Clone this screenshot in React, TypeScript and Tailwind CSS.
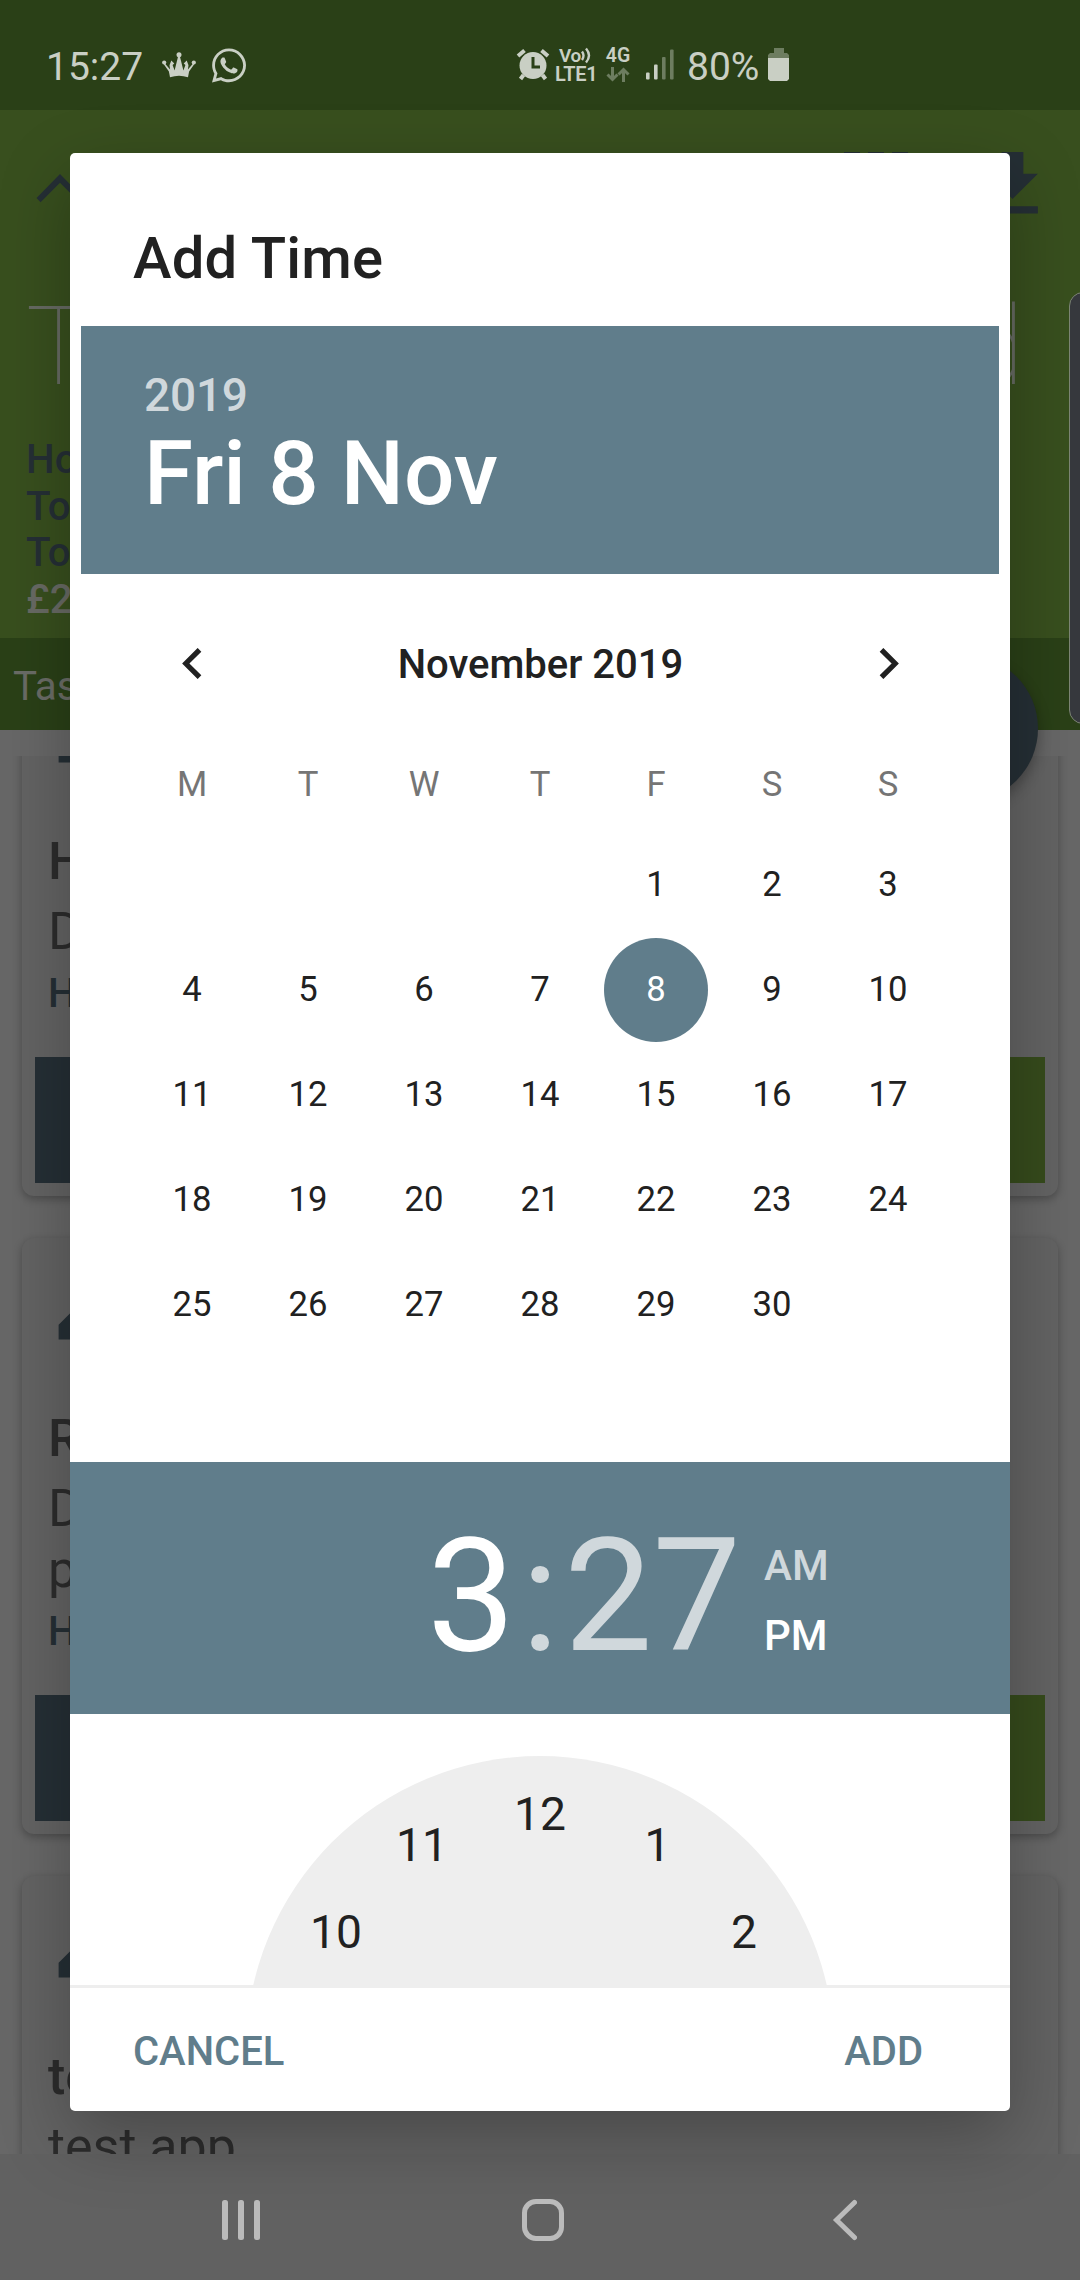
import React from "react";
import { FaWhatsapp } from "react-icons/fa";

const days = ["M", "T", "W", "T", "F", "S", "S"];
const cells: (number | null)[] = [
  null, null, null, null,
  ...Array.from({ length: 30 }, (_, i) => i + 1),
  null,
];
const hours = [
  { n: 10, x: 336, y: 1932 },
  { n: 11, x: 422, y: 1845 },
  { n: 12, x: 540, y: 1813.5 },
  { n: 1, x: 657.5, y: 1845 },
  { n: 2, x: 744, y: 1932 },
];

function StatusBar() {
  return (
    <div className="flex h-[110px] shrink-0 items-start bg-[#2a4017] pl-[46px] text-[#c9cfc4]">
      <span className="mt-[45px] w-[116px] text-[39px] leading-[44px]">15:27</span>
      <svg className="mt-[52px] h-[26px] w-[34px]" viewBox="0 0 34 26" fill="currentColor">
        <circle cx="17" cy="2.8" r="2.5" />
        <circle cx="2.2" cy="10.5" r="2.1" />
        <circle cx="31.8" cy="10.5" r="2.1" />
        <path d="M16.2 4h1.6l3.6 14.5 2-5.5-1.7-1.6 3-2.8 1.8 4.6-.6 4.3 6-7 1 .7-5.8 8.3L26 25.2Q17 22.200 8 25.200L6.900 19.500 1.100 11.200l1-.7 6 7-.6-4.300 1.800-4.600 3 2.800-1.700 1.600 2 5.500z" />
      </svg>
      <FaWhatsapp className="mt-[46px] ml-[16px] h-[39px] w-[34px]" />
      <svg className="mt-[48px] ml-[270px] h-[33px] w-[34px]" viewBox="0 0 34 33">
        <circle cx="17" cy="17.500" r="13.500" fill="currentColor" />
        <path d="M2 8l6.500-5.500M32 8l-6.500-5.500" stroke="currentColor" strokeWidth="4" />
        <path d="M7.500 27l-3 4M26.500 27l3 4" stroke="currentColor" strokeWidth="4" />
        <path d="M17 9v10h7" fill="none" stroke="#2a4017" strokeWidth="3" />
      </svg>
      <div className="mt-[47px] ml-[5px] flex w-[42px] flex-col font-semibold">
        <div className="flex items-center pl-[4px]">
          <span className="text-[19px] leading-[17px] tracking-[-0.5px]">Vo</span>
          <svg className="h-[17px] w-[11px]" viewBox="0 0 11 17" fill="none" stroke="currentColor" strokeWidth="2.400">
            <path d="M1 4.500q3 4 0 8.500M5 1.500q6 7 0 14" />
          </svg>
        </div>
        <span className="mt-[1px] text-[20px] leading-[19px] tracking-[-0.3px]">LTE1</span>
      </div>
      <div className="mt-[47px] ml-[8px] flex w-[26px] flex-col items-center">
        <span className="text-[19.5px] font-semibold leading-[18px]">4G</span>
        <svg className="mt-[2px] h-[15px] w-[24px]" viewBox="0 0 24 15" fill="none" stroke="#6d7d60" strokeWidth="3">
          <path d="M6.500 0v12M1.500 7.500l5 5 5-5M17.500 15V3M12.500 7.500l5-5 5 5" />
        </svg>
      </div>
      <svg className="mt-[49px] ml-[15px] h-[31px] w-[28px]" viewBox="0 0 28 31">
        <rect x="0" y="23.500" width="3.600" height="7" rx="1" fill="currentColor" />
        <rect x="8" y="15.500" width="3.600" height="15" rx="1" fill="currentColor" />
        <rect x="16" y="8" width="3.600" height="22.500" rx="1" fill="#6d7d60" />
        <rect x="24" y="0.500" width="3.600" height="30" rx="1" fill="#6d7d60" />
      </svg>
      <span className="mt-[45px] ml-[13px] w-[81px] text-[39px] leading-[44px]">80%</span>
      <svg className="mt-[48px] h-[33px] w-[21px]" viewBox="0 0 21 33">
        <path d="M6 0h10v5h3l2 2v6H0V7l2-2h4z" fill="#6d7d60" />
        <path d="M0 10h21v21l-2 2H2l-2-2z" fill="currentColor" />
      </svg>
    </div>
  );
}

function Header() {
  return (
    <div className="flex h-[528px] shrink-0 flex-col bg-[#384f1e]">
      <div className="flex pt-[31px] text-[#252f35]">
        <svg className="ml-[17px] h-[87px] w-[87px]" viewBox="0 0 87 87" fill="currentColor">
          <path d="M43 33 19.500 57l4.100 4.200L43 41.800l19.400 19.400 4.100-4.200z" />
        </svg>
        <svg className="ml-[740px] h-[87px] w-[64px]" viewBox="0 0 64 87" fill="currentColor">
          <path d="M0 11h16v16H0zM24 11h16v16H24zM48 11h16v16H48zM0 35h16v16H0zM24 35h16v16H24zM48 35h16v16H48z" />
        </svg>
        <svg className="ml-[61px] h-[87px] w-[87px]" viewBox="0 0 24 24" fill="currentColor">
          <path d="M19 9h-4V3H9v6H5l7 7 7-7zM5 18v2h14v-2H5z" />
        </svg>
      </div>
      <div className="mt-[55px] flex justify-between pr-[56px] pl-[26px] text-[109px] font-thin leading-[128px] text-[#666a62]">
        <span>T</span>
        <span>d</span>
      </div>
      <div className="mt-[26px] flex flex-col pl-[26px] text-[40.4px] font-medium leading-[46.7px] text-[#252f35]">
        <span>Ho</span>
        <span>Tot</span>
        <span>Tot</span>
        <span className="text-[#686a64]">£2</span>
      </div>
    </div>
  );
}

function Card({ title, lines, className = "" }: { title: string; lines: string[]; className?: string }) {
  return (
    <div className={"mx-[22px] flex shrink-0 flex-col rounded-[12px] bg-[#636363] px-[13px] pb-[13px] shadow-[0_3px_8px_rgba(0,0,0,0.28)] " + className}>
      <svg className="mt-[20px] ml-[12px] h-[93px] w-[93px] text-[#252f35]" viewBox="0 0 24 24" fill="currentColor">
        <path d="M3 17.250V21h3.750L17.810 9.940l-3.750-3.750L3 17.250zM20.710 7.040a1 1 0 0 0 0-1.410l-2.340-2.340a1 1 0 0 0-1.410 0l-1.830 1.830 3.750 3.750 1.830-1.830z" />
      </svg>
      <div className="mt-[57px] ml-[13px] text-[52px] leading-[61px] font-medium text-[#2c2c2c]">{title}</div>
      <div className="mt-[9px] ml-[13px] text-[52px] leading-[61px] text-[#2c2c2c]">
        {lines.map((l) => (
          <div key={l}>{l}</div>
        ))}
      </div>
      <div className="mt-[8px] ml-[13px] text-[40.4px] leading-[47px] font-medium text-[#252f35]">H</div>
      <div className="mt-[40px] flex h-[126px] justify-between">
        <div className="w-[300px] bg-[#252f35]" />
        <div className="w-[300px] bg-[#364b1c]" />
      </div>
    </div>
  );
}

function DialogClock() {
  return (
    <div className="relative h-[271px] overflow-hidden">
      <div className="absolute top-[42px] left-[176px] h-[588px] w-[588px] rounded-full bg-[#eee]" />
      {hours.map((h) => (
        <span
          key={h.n}
          className="absolute -translate-x-1/2 -translate-y-1/2 text-[46.2px] leading-[54px] text-[#212121]"
          style={{ left: h.x - 70, top: h.y - 1714 }}
        >
          {h.n}
        </span>
      ))}
    </div>
  );
}

function Dialog() {
  return (
    <div className="absolute top-[153px] left-[70px] flex h-[1958px] w-[940px] flex-col overflow-hidden rounded-[5px] bg-white text-[#212121]">
      <h1 className="h-[173px] pt-[71px] pl-[63px] text-[58px] leading-[68px] font-medium tracking-[0.2px]">Add Time</h1>
      <div className="mx-[11px] flex h-[248px] flex-col bg-[#607d8b] pt-[42px] pl-[63px] font-medium">
        <span className="text-[46px] leading-[54px] tracking-[-0.2px] text-[#d0d8dc]">2019</span>
        <span className="text-[89px] leading-[104px] text-white">Fri 8 Nov</span>
      </div>
      <div className="mx-[64px] mt-[37px] flex h-[105px] items-center justify-between pr-[47px] pl-[48px] text-[40px] font-medium">
        <svg className="h-[31px] w-[20px]" viewBox="0 0 20 31" fill="none" stroke="currentColor" strokeWidth="5.200">
          <path d="M17.500 1.800 3.800 15.500l13.700 13.700" />
        </svg>
        <span className="pt-[2px]">November 2019</span>
        <svg className="h-[31px] w-[20px]" viewBox="0 0 20 31" fill="none" stroke="currentColor" strokeWidth="5.200">
          <path d="M2.500 1.800l13.700 13.700L2.500 29.200" />
        </svg>
      </div>
      <div className="mx-[64px] mt-[39px] grid h-[60px] grid-cols-7 items-center text-center text-[34.65px] text-[#757575]">
        {days.map((d, i) => (
          <span key={i}>{d}</span>
        ))}
      </div>
      <div className="mx-[64px] mt-[17px] grid h-[630px] auto-rows-[105px] grid-cols-7 text-[34.65px]">
        {cells.map((c, i) => (
          <div key={i} className="flex items-center justify-center">
            {c === 8 ? (
              <span className="flex size-[104px] items-center justify-center rounded-full bg-[#607d8b] text-white">8</span>
            ) : (
              c
            )}
          </div>
        ))}
      </div>
      <div className="flex h-[252px] bg-[#607d8b] text-white">
        <div className="flex pt-[8px] pl-[357px] text-[157.5px] leading-[252px]">
          <span className="w-[89px]">3</span>
          <span className="w-[48px] text-center text-[#d0d8dc]">:</span>
          <span className="text-[#d0d8dc]">27</span>
        </div>
        <div className="flex flex-col pt-[69px] pl-[23px] text-[42px] leading-[70px] font-medium">
          <span className="text-[#d0d8dc]">AM</span>
          <span>PM</span>
        </div>
      </div>
      <DialogClock />
      <div className="flex flex-1 items-center justify-between border-t-[3px] border-[#eee] pt-[4px] pr-[87px] pl-[63px] text-[40px] font-medium text-[#607d8b]">
        <span>CANCEL</span>
        <span>ADD</span>
      </div>
    </div>
  );
}

export default function App() {
  return (
    <div className="relative h-[2280px] w-[1080px] overflow-hidden bg-[#676767] [font-family:Roboto,sans-serif]">
      <div className="flex h-full flex-col">
        <StatusBar />
        <Header />
        <div className="flex h-[92px] shrink-0 items-center bg-[#2a4017] pl-[13px] text-[40.4px] text-[#6a6c66]">
          <span className="mt-[6px]">Tas</span>
        </div>
        <div className="mt-[26px] flex flex-1 flex-col overflow-hidden">
          <Card title="H" lines={["D"]} className="-mt-[95px]" />
          <Card title="R" lines={["D", "p"]} className="mt-[42px]" />
          <Card title="te" lines={["test app"]} className="mt-[42px]" />
        </div>
        <div className="h-[126px] shrink-0 bg-[#616161]" />
      </div>

      <div className="absolute top-[655px] left-[891px] size-[147px] rounded-full bg-[#252f35] shadow-[0_6px_14px_rgba(0,0,0,0.3)]" />
      <div className="absolute top-[153px] left-[70px] h-[1958px] w-[940px] rounded-[5px] shadow-[0_25px_70px_rgba(0,0,0,0.27)]" />
      <div className="absolute top-[292px] left-[1069px] h-[432px] w-[30px] rounded-[14px] border-[1.5px] border-[#7c8474] bg-[#36383d]" />
      <Dialog />

      <div className="absolute bottom-0 flex h-[126px] w-full items-center pt-[6px]">
        <svg className="ml-[221px] h-[42px] w-[40px]" viewBox="0 0 40 42" fill="#bbb">
          <rect x="1" y="1" width="6" height="40" rx="2.500" />
          <rect x="17" y="1" width="6" height="40" rx="2.500" />
          <rect x="33" y="1" width="6" height="40" rx="2.500" />
        </svg>
        <div className="ml-[261px] size-[42px] rounded-[14px] border-[5px] border-[#bbb]" />
        <svg className="ml-[267px] h-[42px] w-[26px]" viewBox="0 0 26 42" fill="none" stroke="#bbb" strokeWidth="5" strokeLinecap="round">
          <path d="M23.500 3.500 5.500 21l18 17.500" />
        </svg>
      </div>
    </div>
  );
}
